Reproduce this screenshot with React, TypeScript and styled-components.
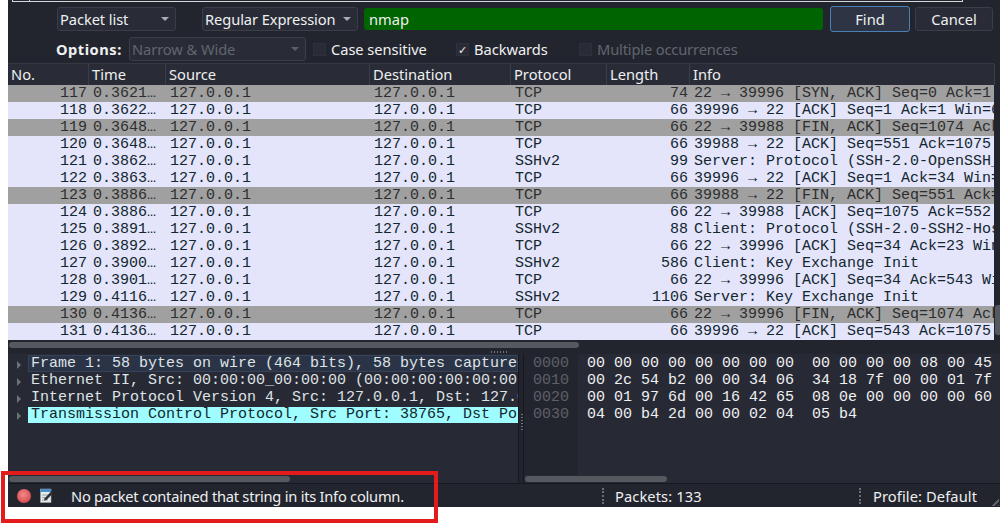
import React from 'react';
import styled, {createGlobalStyle} from 'styled-components';

const GlobalStyle = createGlobalStyle`
  html, body {
    margin: 0;
    padding: 0;
    background: #ffffff;
    overflow: hidden;
  }
`;

const Page = styled.div`
  position: relative;
  width: 1000px;
  height: 525px;
  padding-left: 8px;
  box-sizing: border-box;
  font-family: "Noto Sans", sans-serif;
  font-size: 14.67px;
  color: #eff0f1;
`;

const Window = styled.div`
  height: 507px;
  background: #23252e;
  display: flex;
  flex-direction: column;
`;

const FilterEdge = styled.div`
  height: 2px;
  margin: 0 37px 0 4px;
  box-sizing: border-box;
  border-bottom: 1px solid #d8d8dc;
  border-left: 1px solid #d8d8dc;
  border-right: 1px solid #d8d8dc;
  flex: none;
  position: relative;

  &::after {
    content: '';
    position: absolute;
    left: 16px;
    top: 0;
    width: 1px;
    height: 2px;
    background: #d8d8dc;
  }
`;

const SearchRow = styled.div`
  height: 33px;
  flex: none;
  display: flex;
  align-items: center;
  padding: 1px 7px 0 49px;
  box-sizing: border-box;
`;

const OptionsRow = styled.div`
  height: 28px;
  flex: none;
  display: flex;
  align-items: center;
  padding-left: 48px;
`;

const Combo = styled.div<{$width: number; $gap?: number; $disabled?: boolean}>`
  width: ${p => p.$width}px;
  height: 24px;
  margin-left: ${p => p.$gap || 0}px;
  flex: none;
  box-sizing: border-box;
  border: 1px solid #3b3e49;
  border-radius: 3px;
  background: #292c37;
  display: flex;
  align-items: center;
  justify-content: space-between;
  padding: 0 6px 0 2px;
  color: ${p => (p.$disabled ? '#61656e' : '#eff0f1')};
  white-space: nowrap;
  letter-spacing: -0.08px;

  &::after {
    content: '';
    border-left: 4px solid transparent;
    border-right: 4px solid transparent;
    border-top: 4px solid ${p => (p.$disabled ? '#5a5e67' : '#a9acb2')};
  }
`;

const FindField = styled.div`
  width: 459px;
  height: 22px;
  margin-left: 6px;
  flex: none;
  box-sizing: border-box;
  background: #006400;
  border-radius: 3px;
  padding-left: 5px;
  line-height: 22px;
`;

const Button = styled.div<{$width: number; $gap: number; $primary?: boolean}>`
  width: ${p => p.$width}px;
  height: ${p => (p.$primary ? 26 : 24)}px;
  margin-left: ${p => p.$gap}px;
  flex: none;
  box-sizing: border-box;
  border: 1px solid ${p => (p.$primary ? '#4a80b8' : '#3b3e49')};
  border-radius: 3px;
  background: ${p => (p.$primary ? '#2f3444' : '#292c37')};
  display: flex;
  align-items: center;
  justify-content: center;
`;

const OptionsLabel = styled.div`
  font-weight: 700;
  letter-spacing: 0.5px;
  width: 73px;
  flex: none;
`;

const Check = styled.div<{$left: number; $width: number; $disabled?: boolean}>`
  margin-left: ${p => p.$left}px;
  width: ${p => p.$width}px;
  flex: none;
  display: flex;
  align-items: center;
  gap: 5px;
  white-space: nowrap;
  letter-spacing: ${p => (p.$disabled ? -0.15 : -0.05)}px;
  color: ${p => (p.$disabled ? '#61656e' : '#eff0f1')};
`;

const CheckBox = styled.div`
  width: 13px;
  height: 13px;
  flex: none;
  background: #292c37;
  border: 1px solid #2e313c;
  box-sizing: border-box;
  color: #eff0f1;
  font-size: 11px;
  line-height: 11px;
  text-align: center;
`;

const columns = '80px 77px 204px 141px 96px 83px 1fr';

const ListHeader = styled.div`
  height: 22px;
  flex: none;
  margin-right: 6px;
  display: grid;
  grid-template-columns: ${columns};
  background: #292c37;
  border-top: 1px solid #363944;
  box-sizing: border-box;
`;

const HeaderCell = styled.div`
  padding-left: 4px;
  line-height: 21px;
  border-right: 1px solid #3b3e49;
  box-sizing: border-box;
  margin-right: -1px;
  white-space: nowrap;

  &:first-child {
    padding-left: 3px;
  }
`;

const ListBody = styled.div`
  height: 255px;
  flex: none;
  display: flex;
`;

const Rows = styled.div`
  flex: 1;
  min-width: 0;
  overflow: hidden;
`;

const Row = styled.div<{$closing?: boolean}>`
  height: 17px;
  display: grid;
  grid-template-columns: ${columns};
  background: ${p => (p.$closing ? '#a0a0a0' : '#e4e4fb')};
  color: ${p => (p.$closing ? '#2e2e2e' : '#12272e')};
  font-family: "Liberation Mono", monospace;
  font-size: 15px;
  line-height: 17px;
`;

const Cell = styled.div<{$right?: boolean}>`
  padding: 0 ${p => (p.$right ? 1 : 0)}px 0 ${p => (p.$right ? 0 : 5)}px;
  text-align: ${p => (p.$right ? 'right' : 'left')};
  white-space: pre;
  overflow: hidden;
`;

const VTrack = styled.div`
  width: 6px;
  flex: none;
  display: flex;
  flex-direction: column;
  justify-content: flex-end;
  padding-bottom: 5px;
  box-sizing: border-box;
`;

const VThumb = styled.div`
  width: 5px;
  height: 30px;
  margin-left: 1px;
  border-radius: 3px 0 0 3px;
  background: #55585f;
`;

const HTrack = styled.div<{$height: number}>`
  height: ${p => p.$height}px;
  flex: none;
  display: flex;
  align-items: center;
  padding-left: 1px;
`;

const HThumb = styled.div<{$width: number}>`
  width: ${p => p.$width}px;
  height: 6px;
  border-radius: 3px;
  background: #55585f;
`;

const Splitter = styled.div`
  height: 5px;
  flex: none;
  display: flex;
  justify-content: center;
  align-items: flex-end;
  padding: 0 10px 1px 0;
  box-sizing: border-box;

  &::after {
    content: '';
    width: 17px;
    height: 2px;
    background: repeating-linear-gradient(90deg, #70737a 0 1px, transparent 1px 3px);
  }
`;

const Panes = styled.div`
  flex: 1;
  min-height: 0;
  display: grid;
  grid-template-columns: 511px 1fr;
  border-bottom: 1px solid #17181e;
`;

const DetailPane = styled.div`
  min-width: 0;
  display: flex;
  flex-direction: column;
  background: #272a35;
  border-right: 1px solid #17181e;
`;

const DetailList = styled.div`
  flex: 1;
  min-height: 0;
  overflow: hidden;
  padding-top: 1px;
  font-family: "Liberation Mono", monospace;
  font-size: 15px;
`;

const DetailRow = styled.div<{$state?: 'current' | 'match'}>`
  height: ${p => (p.$state === 'match' ? 16 : 17)}px;
  margin-top: ${p => (p.$state === 'match' ? 1 : 0)}px;
  line-height: ${p => (p.$state === 'match' ? 15 : 17)}px;
  position: relative;
  margin-left: 20px;
  padding-left: 3px;
  white-space: pre;
  box-sizing: border-box;
  color: ${p => (p.$state === 'match' ? '#12272e' : '#dfe3e6')};
  background: ${p => (p.$state === 'match' ? '#9ffcff' : p.$state === 'current' ? '#2a3446' : 'transparent')};
  box-shadow: ${p => (p.$state === 'current' ? 'inset 0 0 0 1px #34425a' : 'none')};

  &::before {
    content: '';
    position: absolute;
    left: -11px;
    top: ${p => (p.$state === 'match' ? 5 : 6)}px;
    border-top: 4px solid transparent;
    border-bottom: 4px solid transparent;
    border-left: 4px solid #6d7179;
  }
`;

const PaneDivider = styled.div`
  position: absolute;
  left: 521px;
  top: 412px;
  width: 2px;
  height: 18px;
  background: repeating-linear-gradient(0deg, #70737a 0 1px, transparent 1px 3px);
`;

const HexPane = styled.div`
  margin-left: 4px;
  min-width: 0;
  display: flex;
  flex-direction: column;
  background: #272a35;
  border-left: 1px solid #17181e;
`;

const HexBody = styled.div`
  flex: 1;
  min-height: 0;
  display: grid;
  grid-template-columns: 54px 1fr;
  font-family: "Liberation Mono", monospace;
  font-size: 15px;
  line-height: 17px;
`;

const Offsets = styled.div`
  background: #23252e;
  color: #5c6068;
  padding: 1px 0 0 9px;
`;

const HexBytes = styled.div`
  padding: 1px 0 0 9px;
  color: #eff0f1;
  white-space: pre;
`;

const StatusBar = styled.div`
  height: 23px;
  flex: none;
  display: flex;
  align-items: center;
  position: relative;
`;

const StatusDot = styled.div`
  width: 14px;
  height: 14px;
  margin-left: 9px;
  flex: none;
  border-radius: 50%;
  background: radial-gradient(circle at 45% 40%, #f08a8a, #d94f52 70%, #b84044);
`;

const NoteIcon = styled.svg`
  width: 14px;
  height: 15px;
  margin-left: 9px;
  flex: none;
`;

const Message = styled.div`
  margin-left: 17px;
  flex: 1;
  letter-spacing: -0.24px;
`;

const StatusField = styled.div<{$width: number; $inset: number}>`
  width: ${p => p.$width}px;
  height: 16px;
  flex: none;
  box-sizing: border-box;
  padding-left: ${p => p.$inset}px;
  line-height: 16px;
  letter-spacing: 0.1px;
  border-left: 2px dotted #6a6d74;
`;

const SizeGrip = styled.div`
  position: absolute;
  right: 1px;
  bottom: 1px;
  width: 8px;
  height: 8px;
  background: repeating-linear-gradient(135deg, transparent 0 2px, #5d6067 2px 4px);
  clip-path: polygon(100% 0, 100% 100%, 0 100%);
`;

const Annotation = styled.div`
  position: absolute;
  left: 1px;
  top: 471px;
  width: 437px;
  height: 52px;
  box-sizing: border-box;
  border: 4px solid #e21b1c;
  pointer-events: none;
`;

type Packet = [number, string, string, string, string];

const packets: Packet[] = [
  [117, '0.3621…', 'TCP', '74', '22 → 39996 [SYN, ACK] Seq=0 Ack=1 Win=65483'],
  [118, '0.3622…', 'TCP', '66', '39996 → 22 [ACK] Seq=1 Ack=1 Win=65536'],
  [119, '0.3648…', 'TCP', '66', '22 → 39988 [FIN, ACK] Seq=1074 Ack=551'],
  [120, '0.3648…', 'TCP', '66', '39988 → 22 [ACK] Seq=551 Ack=1075 Win=65536'],
  [121, '0.3862…', 'SSHv2', '99', 'Server: Protocol (SSH-2.0-OpenSSH_8.4p1)'],
  [122, '0.3863…', 'TCP', '66', '39996 → 22 [ACK] Seq=1 Ack=34 Win=65536'],
  [123, '0.3886…', 'TCP', '66', '39988 → 22 [FIN, ACK] Seq=551 Ack=1075'],
  [124, '0.3886…', 'TCP', '66', '22 → 39988 [ACK] Seq=1075 Ack=552 Win=65536'],
  [125, '0.3891…', 'SSHv2', '88', 'Client: Protocol (SSH-2.0-SSH2-Host)'],
  [126, '0.3892…', 'TCP', '66', '22 → 39996 [ACK] Seq=34 Ack=23 Win=65536'],
  [127, '0.3900…', 'SSHv2', '586', 'Client: Key Exchange Init'],
  [128, '0.3901…', 'TCP', '66', '22 → 39996 [ACK] Seq=34 Ack=543 Win=65536'],
  [129, '0.4116…', 'SSHv2', '1106', 'Server: Key Exchange Init'],
  [130, '0.4136…', 'TCP', '66', '22 → 39996 [FIN, ACK] Seq=1074 Ack=543'],
  [131, '0.4136…', 'TCP', '66', '39996 → 22 [ACK] Seq=543 Ack=1075']
];

const closingRows = [117, 119, 123, 130];

const headers = ['No.', 'Time', 'Source', 'Destination', 'Protocol', 'Length', 'Info'];

const hexOffsets = ['0000', '0010', '0020', '0030'];

const hexLines = [
  '00 00 00 00 00 00 00 00  00 00 00 00 08 00 45',
  '00 2c 54 b2 00 00 34 06  34 18 7f 00 00 01 7f',
  '00 01 97 6d 00 16 42 65  08 0e 00 00 00 00 60',
  '04 00 b4 2d 00 00 02 04  05 b4'
];

export default function App() {
  return (
    <>
      <GlobalStyle />
      <Page>
        <Window>
          <FilterEdge />
          <SearchRow>
            <Combo $width={119}>Packet list</Combo>
            <Combo $width={156} $gap={26}>Regular Expression</Combo>
            <FindField>nmap</FindField>
            <Button $width={80} $gap={7} $primary>Find</Button>
            <Button $width={78} $gap={5}>Cancel</Button>
          </SearchRow>
          <OptionsRow>
            <OptionsLabel>Options:</OptionsLabel>
            <Combo $width={177} $disabled>Narrow &amp; Wide</Combo>
            <Check $left={7} $width={125}>
              <CheckBox />
              Case sensitive
            </Check>
            <Check $left={18} $width={104}>
              <CheckBox>✓</CheckBox>
              Backwards
            </Check>
            <Check $left={19} $width={170} $disabled>
              <CheckBox />
              Multiple occurrences
            </Check>
          </OptionsRow>
          <ListHeader>
            {headers.map(h => (
              <HeaderCell key={h}>{h}</HeaderCell>
            ))}
          </ListHeader>
          <ListBody>
            <Rows>
              {packets.map(([no, time, proto, len, info]) => (
                <Row key={no} $closing={closingRows.includes(no)}>
                  <Cell $right>{no}</Cell>
                  <Cell>{time}</Cell>
                  <Cell>127.0.0.1</Cell>
                  <Cell>127.0.0.1</Cell>
                  <Cell>{proto}</Cell>
                  <Cell $right>{len}</Cell>
                  <Cell>{info}</Cell>
                </Row>
              ))}
            </Rows>
            <VTrack>
              <VThumb />
            </VTrack>
          </ListBody>
          <HTrack $height={9}>
            <HThumb $width={570} />
          </HTrack>
          <Splitter />
          <Panes>
            <DetailPane>
              <DetailList>
                <DetailRow $state="current">Frame 1: 58 bytes on wire (464 bits), 58 bytes captured</DetailRow>
                <DetailRow>Ethernet II, Src: 00:00:00_00:00:00 (00:00:00:00:00:00)</DetailRow>
                <DetailRow>Internet Protocol Version 4, Src: 127.0.0.1, Dst: 127.0.0.1</DetailRow>
                <DetailRow $state="match">Transmission Control Protocol, Src Port: 38765, Dst Port: 22</DetailRow>
              </DetailList>
              <HTrack $height={8}>
                <HThumb $width={281} />
              </HTrack>
            </DetailPane>
            <HexPane>
              <HexBody>
                <Offsets>
                  {hexOffsets.map(o => (
                    <div key={o}>{o}</div>
                  ))}
                </Offsets>
                <HexBytes>
                  {hexLines.map(l => (
                    <div key={l}>{l}</div>
                  ))}
                </HexBytes>
              </HexBody>
              <HTrack $height={8}>
                <HThumb $width={142} />
              </HTrack>
            </HexPane>
          </Panes>
          <StatusBar>
            <StatusDot />
            <NoteIcon viewBox="0 0 14 15">
              <rect x="0.5" y="1" width="10.5" height="13.5" fill="#e8eaec" stroke="#9aa0a6" strokeWidth="0.6" />
              <rect x="0.5" y="1" width="10.5" height="3" fill="#4a90c8" />
              <path d="M2 7h6M2 9.5h4M2 12h6" stroke="#8d9298" strokeWidth="0.8" />
              <path d="M4.5 10.5 11.5 3l2 1.8-7 7.2-2.5.6z" fill="#2c2f36" />
            </NoteIcon>
            <Message>No packet contained that string in its Info column.</Message>
            <StatusField $width={257} $inset={11}>Packets: 133</StatusField>
            <StatusField $width={141} $inset={12}>Profile: Default</StatusField>
            <SizeGrip />
          </StatusBar>
        </Window>
        <PaneDivider />
        <Annotation />
      </Page>
    </>
  );
}
